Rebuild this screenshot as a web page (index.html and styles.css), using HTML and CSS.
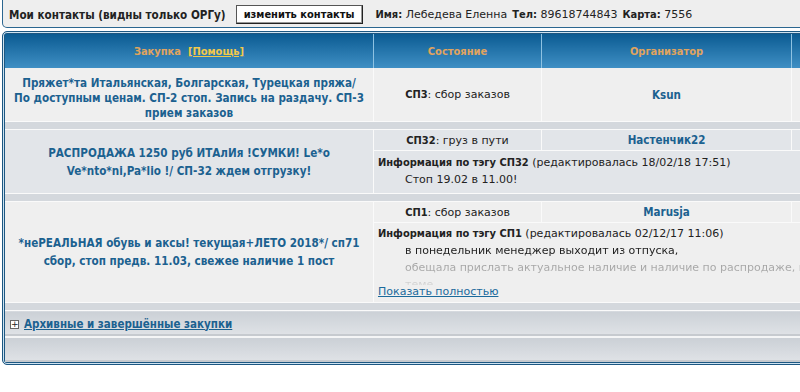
FILE: index.html
```html
<!DOCTYPE html>
<html>
<head>
  <title>Мои закупки</title>
  <link rel="stylesheet" href="styles.css">
</head>
<body>
  <div class="contacts">
    <b>Мои контакты (видны только ОРГу)</b>
    <button type="button" class="edit-btn">изменить контакты</button>
    <span class="info-line"><b>Имя:</b> Лебедева Еленна</span>
    <span class="info-line"><b>Тел:</b> 89618744843</span>
    <span class="info-line"><b>Карта:</b> 7556</span>
  </div>

  <div class="board">
    <table class="purchases">
      <tr class="head">
        <th class="c1">Закупка &nbsp;<a href="#" class="help">[Помощь]</a></th>
        <th class="c2">Состояние</th>
        <th class="c3">Организатор</th>
        <th class="c4"></th>
      </tr>

      <tr class="row light">
        <td class="title tight">Пряжет*та Итальянская, Болгарская, Турецкая пряжа/ По доступным ценам. СП-2 стоп. Запись на раздачу. СП-3 прием заказов</td>
        <td class="state"><b>СП3</b>: сбор заказов</td>
        <td class="org"><a href="#">Ksun</a></td>
        <td></td>
      </tr>
      <tr class="sep"><td colspan="4"></td></tr>

      <tr class="row dark">
        <td class="title" rowspan="2">РАСПРОДАЖА 1250 руб ИТАлИя !СУМКИ! Le*o Ve*nto*ni,Pa*lio !/ СП-32 ждем отгрузку!</td>
        <td class="state sub"><b>СП32</b>: груз в пути</td>
        <td class="org sub"><a href="#">Настенчик22</a></td>
        <td class="sub"></td>
      </tr>
      <tr class="dark">
        <td class="tag short" colspan="3">
          <div class="tag-head"><b>Информация по тэгу СП32</b> (редактировалась 18/02/18 17:51)</div>
          <div class="tag-text">Стоп 19.02 в 11.00!</div>
        </td>
      </tr>
      <tr class="sep"><td colspan="4"></td></tr>

      <tr class="row light">
        <td class="title" rowspan="2">*неРЕАЛЬНАЯ обувь и аксы! текущая+ЛЕТО 2018*/ сп71 сбор, стоп предв. 11.03, свежее наличие 1 пост</td>
        <td class="state sub"><b>СП1</b>: сбор заказов</td>
        <td class="org sub"><a href="#">Marusja</a></td>
        <td class="sub"></td>
      </tr>
      <tr class="light">
        <td class="tag" colspan="3">
          <div class="tag-head"><b>Информация по тэгу СП1</b> (редактировалась 02/12/17 11:06)</div>
          <div class="tag-text faded">в понедельник менеджер выходит из отпуска,<br>обещала прислать актуальное наличие и наличие по распродаже, возможно уже завтра будет в<br>теме.</div>
          <a href="#" class="more">Показать полностью</a>
        </td>
      </tr>
      <tr class="sep"><td colspan="4"></td></tr>

      <tr class="archive">
        <td colspan="4"><span class="plus">+</span><a href="#">Архивные и завершённые закупки</a></td>
      </tr>
      <tr class="footer"><td colspan="4"></td></tr>
    </table>
  </div>
</body>
</html>
```

FILE: styles.css
```css
body {
  margin: 0;
  width: 800px;
  overflow: hidden;
  background: #fff;
  font-family: "DejaVu Sans", Verdana, sans-serif;
  font-size: 11px;
  color: #222;
}

b, th, .title, .org a, .archive a, .edit-btn {
  font-family: "DejaVu Sans Condensed", "DejaVu Sans", sans-serif;
  font-stretch: condensed;
}

.contacts {
  width: 830px;
  height: 25px;
  padding: 2px 0 0 6px;
  margin-left: 2px;
  display: flex;
  align-items: center;
  background: #eeeeee;
  border: 1px solid #2b6690;
  border-top: 0;
  border-radius: 0 0 5px 5px;
}

.contacts > b {
  font-size: 11.6px;
}

.edit-btn {
  margin: 0 13px 0 10px;
  height: 19px;
  padding: 0 7px;
  background: #fff;
  border: 1px solid #555;
  border-right-color: #222;
  border-bottom-color: #222;
  box-shadow: inset -1px -1px 0 #999;
  font-size: 11px;
  font-weight: bold;
  color: #111;
}

.info-line {
  white-space: nowrap;
  margin-right: 5px;
}

.info-line b {
  font-size: 11px;
}

.board {
  width: 900px;
  margin: 3px 0 0 2px;
  border: 1px solid #1c5782;
  box-shadow: inset 0 0 0 1px #cfe3f0, inset 0 0 0 2px #1c5782;
  border-radius: 5px;
  padding: 2px;
  background: #e6e8eb;
}

.purchases {
  width: 100%;
  border-collapse: collapse;
  table-layout: fixed;
}

.purchases td, .purchases th {
  padding: 0;
}

.head th {
  height: 34px;
  background: linear-gradient(#0b5b92, #3f8fc4);
  color: #e0a45e;
  font-size: 11px;
  font-weight: bold;
  border-right: 1px solid #8ec2e2;
}

.c1 { width: 368px; }
.c2 { width: 167px; }
.c3 { width: 249px; }

.help {
  color: #f2c84a;
}

.light td {
  background: #efefef;
}

.dark td {
  background: #e2e5e9;
}

.row td {
  border-right: 1px solid #fafafa;
}

.title {
  padding: 4px 8px !important;
  text-align: center;
  font-size: 11.6px;
  font-weight: bold;
  line-height: 18px;
  color: #1b6190;
}

.title.tight {
  height: 45px;
  padding: 8px 8px 0 !important;
  line-height: 15px;
}

.state {
  text-align: center;
}

.state b {
  font-size: 11px;
}

.org {
  text-align: center;
}

.org a {
  color: #1b6190;
  font-weight: bold;
  font-size: 11.5px;
  text-decoration: none;
}

.sub {
  height: 20px;
  border-bottom: 1px solid #fafafa;
}

.tag {
  padding: 2px 4px 4px !important;
  vertical-align: top;
  line-height: 17px;
}

.tag.short {
  padding: 3px 4px 5px !important;
}

.tag-head b {
  font-size: 11px;
}

.tag-text {
  padding-left: 27px;
  white-space: nowrap;
}

.tag-text.faded {
  height: 43px;
  overflow: hidden;
  -webkit-mask-image: linear-gradient(#000 36%, rgba(0,0,0,.38) 44%, rgba(0,0,0,.32) 70%, rgba(0,0,0,.1) 100%);
  mask-image: linear-gradient(#000 36%, rgba(0,0,0,.38) 44%, rgba(0,0,0,.32) 70%, rgba(0,0,0,.1) 100%);
}

.more {
  display: block;
  line-height: 13px;
  color: #1b6a9c;
}

.sep td {
  height: 7px;
  background: #d4d8dd;
  border-top: 1px solid #fafafa;
  border-bottom: 1px solid #fafafa;
}

.archive td, .footer td {
  height: 25px;
  background: linear-gradient(#cbd0d6, #e0e3e7);
  border-bottom: 2px solid #f4f5f6;
  box-shadow: inset 0 -2px 0 #c6cacf;
}

.archive td {
  padding-left: 5px;
}

.archive a {
  color: #1b6190;
  font-size: 11.5px;
  font-weight: bold;
}

.plus {
  display: inline-block;
  width: 7px;
  height: 7px;
  margin-right: 5px;
  border: 1px solid #666;
  background: #fff;
  font-size: 9px;
  line-height: 7px;
  text-align: center;
  vertical-align: 1px;
}

.footer td {
  border-bottom: 0;
  height: 24px;
}
```
